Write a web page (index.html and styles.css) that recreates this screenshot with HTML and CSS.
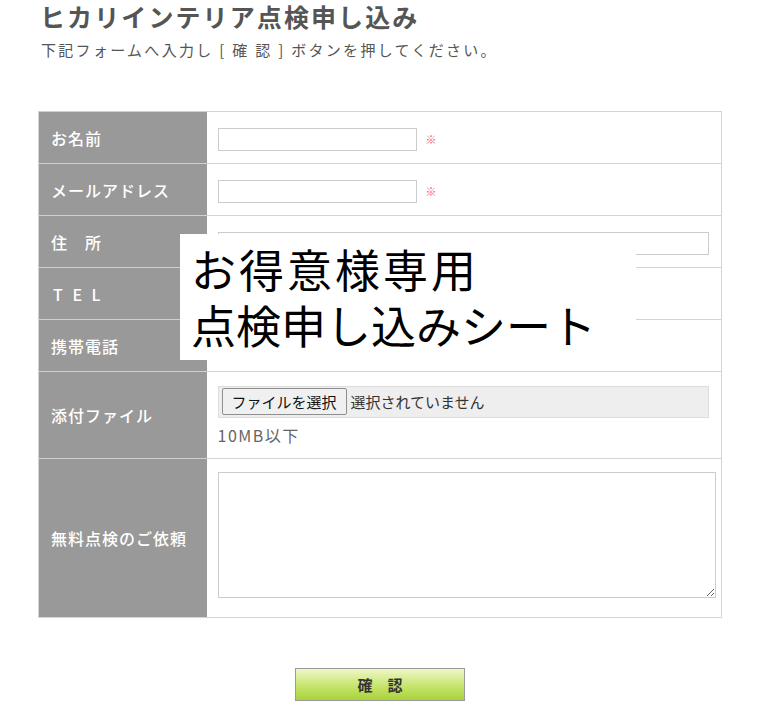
FILE: index.html
```html
<!DOCTYPE html>
<html lang="ja">
<head>
<meta charset="utf-8">
<title>ヒカリインテリア点検申し込み</title>
<link rel="stylesheet" href="styles.css">
</head>
<body>
<div class="page">
  <h1 class="title">ヒカリインテリア点検申し込み</h1>
  <p class="lead">下記フォームへ入力し [ 確 認 ] ボタンを押してください。</p>

  <form class="form">
    <table class="form-table">
      <tr class="row">
        <th class="label">お名前</th>
        <td class="field"><input class="text short" type="text"><span class="req">※</span></td>
      </tr>
      <tr class="row">
        <th class="label">メールアドレス</th>
        <td class="field"><input class="text short" type="text"><span class="req">※</span></td>
      </tr>
      <tr class="row">
        <th class="label">住　所</th>
        <td class="field"><input class="text long" type="text"></td>
      </tr>
      <tr class="row">
        <th class="label tel">TEL</th>
        <td class="field"><input class="text short" type="text"></td>
      </tr>
      <tr class="row">
        <th class="label">携帯電話</th>
        <td class="field"><input class="text short" type="text"></td>
      </tr>
      <tr class="row file-row">
        <th class="label">添付ファイル</th>
        <td class="field">
          <div class="file-box"><span class="file-btn">ファイルを選択</span><span class="file-name">選択されていません</span></div>
          <div class="note">10MB以下</div>
        </td>
      </tr>
      <tr class="row area-row">
        <th class="label">無料点検のご依頼</th>
        <td class="field"><textarea class="area"></textarea></td>
      </tr>
    </table>
    <div class="actions"><button type="button" class="submit">確　認</button></div>
  </form>

  <div class="overlay"><span class="overlay-l1">お得意様専用</span><br>点検申し込みシート</div>
</div>
</body>
</html>
```
FILE: styles.css
```css
* { box-sizing: border-box; }
html, body { margin: 0; padding: 0; background: #fff; }
body {
  font-family: "Noto Sans CJK JP", "Noto Sans", sans-serif;
  color: #555;
}
.page {
  position: relative;
  width: 771px;
  padding: 2px 0 0 38px;
}
.title {
  margin: 0;
  padding: 0 0 0 2px;
  font-size: 25px;
  line-height: 28px;
  font-weight: bold;
  color: #555;
  letter-spacing: 2.1px;
}
.lead {
  margin: 10px 0 0 0;
  padding-left: 3px;
  font-size: 15px;
  line-height: 20px;
  color: #555;
  letter-spacing: 2.3px;
}
.form { margin-top: 51px; width: 684px; }
.form-table {
  width: 684px;
  border-collapse: collapse;
  border: 1px solid #d4d4d4;
}
.row { height: 52px; }
.label {
  width: 168px;
  background: #999;
  color: #fff;
  text-align: left;
  font-weight: 500;
  font-size: 16px;
  letter-spacing: 1px;
  padding: 0 12px;
  border-top: 1px solid #d0d0d0;
  vertical-align: middle;
}
.label.tel { letter-spacing: 0.6em; padding-left: 14px; }
.field {
  border-top: 1px solid #d4d4d4;
  padding: 0 11px;
  vertical-align: middle;
}
.text {
  height: 23px;
  border: 1px solid #ccc;
  background: #fff;
  padding: 0 4px;
  vertical-align: middle;
}
.short { width: 199px; }
.long { width: 491px; }
.req {
  color: #f06070;
  font-size: 11px;
  margin-left: 9px;
  vertical-align: middle;
}
.file-row { height: 87px; }
.file-box {
  display: flex;
  align-items: center;
  width: 491px;
  height: 32px;
  background: #eee;
  border: 1px solid #ddd;
  padding: 0 3px;
  margin-top: 2px;
}
.file-btn {
  display: inline-block;
  height: 27px;
  line-height: 25px;
  padding: 0 9px;
  border: 1px solid #8f8f8f;
  border-radius: 2px;
  background: #f0f0f0;
  color: #111;
  font-size: 15px;
}
.file-name {
  margin-left: 4px;
  font-size: 15px;
  color: #333;
}
.note {
  margin-top: 5px;
  font-size: 16px;
  letter-spacing: 1.5px;
  color: #666;
}
.area-row { height: 159px; }
.area {
  display: block;
  width: 498px;
  height: 126px;
  border: 1px solid #ccc;
  resize: vertical;
  margin: 0;
}
.area-row .field { padding: 13px 5px 19px 11px; }
.actions {
  display: flex;
  justify-content: center;
  margin-top: 50px;
}
.submit {
  width: 170px;
  height: 33px;
  border: 1px solid #9a9a9a;
  background: linear-gradient(#eef8c8, #c6e46e 55%, #a9d23a);
  color: #333;
  font-family: inherit;
  font-size: 15px;
  font-weight: bold;
  padding: 0;
}
.overlay {
  position: absolute;
  left: 180px;
  top: 234px;
  width: 456px;
  height: 126px;
  background: #fff;
  color: #000;
  font-size: 45px;
  line-height: 56px;
  padding: 7px 0 0 11px;
  font-weight: normal;
}
.overlay-l1 { letter-spacing: 3px; }
```
